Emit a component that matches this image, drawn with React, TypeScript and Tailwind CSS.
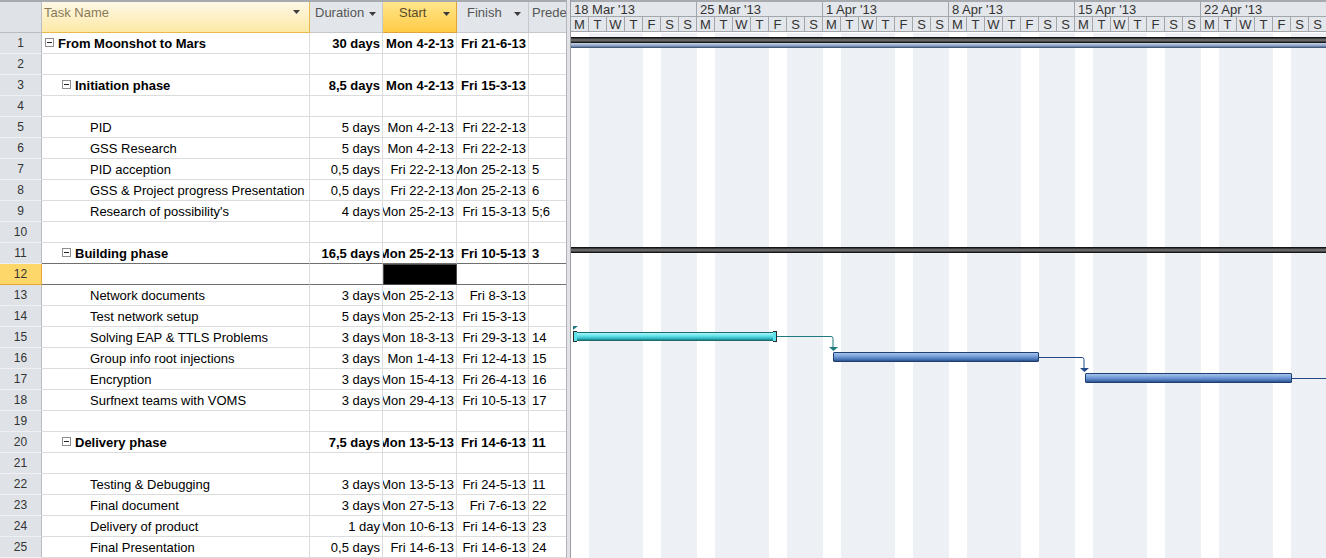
import React from "react";

type Row = {
  n: number;
  name?: string;
  level?: number;
  summary?: boolean;
  dur?: string;
  start?: string;
  finish?: string;
  pred?: string;
};

const rows: Row[] = [
  { n: 1, name: "From Moonshot to Mars", level: 1, summary: true, dur: "30 days", start: "Mon 4-2-13", finish: "Fri 21-6-13" },
  { n: 2 },
  { n: 3, name: "Initiation phase", level: 2, summary: true, dur: "8,5 days", start: "Mon 4-2-13", finish: "Fri 15-3-13" },
  { n: 4 },
  { n: 5, name: "PID", level: 3, dur: "5 days", start: "Mon 4-2-13", finish: "Fri 22-2-13" },
  { n: 6, name: "GSS Research", level: 3, dur: "5 days", start: "Mon 4-2-13", finish: "Fri 22-2-13" },
  { n: 7, name: "PID acception", level: 3, dur: "0,5 days", start: "Fri 22-2-13", finish: "Mon 25-2-13", pred: "5" },
  { n: 8, name: "GSS & Project progress Presentation", level: 3, dur: "0,5 days", start: "Fri 22-2-13", finish: "Mon 25-2-13", pred: "6" },
  { n: 9, name: "Research of possibility's", level: 3, dur: "4 days", start: "Mon 25-2-13", finish: "Fri 15-3-13", pred: "5;6" },
  { n: 10 },
  { n: 11, name: "Building phase", level: 2, summary: true, dur: "16,5 days", start: "Mon 25-2-13", finish: "Fri 10-5-13", pred: "3" },
  { n: 12 },
  { n: 13, name: "Network documents", level: 3, dur: "3 days", start: "Mon 25-2-13", finish: "Fri 8-3-13" },
  { n: 14, name: "Test network setup", level: 3, dur: "5 days", start: "Mon 25-2-13", finish: "Fri 15-3-13" },
  { n: 15, name: "Solving EAP & TTLS Problems", level: 3, dur: "3 days", start: "Mon 18-3-13", finish: "Fri 29-3-13", pred: "14" },
  { n: 16, name: "Group info root injections", level: 3, dur: "3 days", start: "Mon 1-4-13", finish: "Fri 12-4-13", pred: "15" },
  { n: 17, name: "Encryption", level: 3, dur: "3 days", start: "Mon 15-4-13", finish: "Fri 26-4-13", pred: "16" },
  { n: 18, name: "Surfnext teams with VOMS", level: 3, dur: "3 days", start: "Mon 29-4-13", finish: "Fri 10-5-13", pred: "17" },
  { n: 19 },
  { n: 20, name: "Delivery phase", level: 2, summary: true, dur: "7,5 days", start: "Mon 13-5-13", finish: "Fri 14-6-13", pred: "11" },
  { n: 21 },
  { n: 22, name: "Testing & Debugging", level: 3, dur: "3 days", start: "Mon 13-5-13", finish: "Fri 24-5-13", pred: "11" },
  { n: 23, name: "Final document", level: 3, dur: "3 days", start: "Mon 27-5-13", finish: "Fri 7-6-13", pred: "22" },
  { n: 24, name: "Delivery of product", level: 3, dur: "1 day", start: "Mon 10-6-13", finish: "Fri 14-6-13", pred: "23" },
  { n: 25, name: "Final Presentation", level: 3, dur: "0,5 days", start: "Fri 14-6-13", finish: "Fri 14-6-13", pred: "24" },
];

const weeks = ["18 Mar '13", "25 Mar '13", "1 Apr '13", "8 Apr '13", "15 Apr '13", "22 Apr '13"];
const dayLetters = ["M", "T", "W", "T", "F", "S", "S"];
const days = Array.from({ length: 42 }, (_, i) => i);

function Caret() {
  return (
    <svg width="7" height="4" viewBox="0 0 7 4">
      <path d="M0 0h7L3.5 4z" fill="#3c3c3c" />
    </svg>
  );
}

function Collapse() {
  return (
    <span className="mr-[4px] -mt-[3px] inline-flex h-[9px] w-[9px] shrink-0 items-center justify-center border border-[#8e8e8e] bg-white">
      <span className="h-px w-[5px] bg-[#222]" />
    </span>
  );
}

function TableRow({ r }: { r: Row }) {
  const sel = r.n === 12;
  const line = r.n === 11 || r.n === 12 ? "border-b border-[#6f6f6f]" : "border-b border-[#dcdcdc]";
  const weight = r.summary ? "font-bold" : "font-normal";
  const indent = r.level === 1 ? "pl-[3px]" : r.level === 2 ? "pl-[20px]" : "pl-[48px]";
  return (
    <div className="flex h-[21px]">
      <div
        className={
          sel
            ? "flex w-[42px] shrink-0 items-center justify-center border-r border-b border-[#e4a736] bg-[#fdd76a] text-[12px] text-[#333]"
            : "flex w-[42px] shrink-0 items-center justify-center border-r border-b border-r-[#b9bcc1] border-b-[#eef0f3] bg-[#dfe3e8] text-[12px] text-[#333]"
        }
      >
        {r.n}
      </div>
      <div className={`flex w-[268px] shrink-0 items-center overflow-hidden whitespace-nowrap border-r border-r-[#dcdcdc] pt-[1px] ${line} ${indent} ${weight}`}>
        {r.summary && <Collapse />}
        {r.name}
      </div>
      <div className={`flex w-[73px] shrink-0 items-center justify-end overflow-hidden whitespace-nowrap border-r border-r-[#dcdcdc] pr-[2px] pt-[1px] ${line} ${weight}`}>
        {r.dur}
      </div>
      <div
        className={
          sel
            ? "w-[74px] shrink-0 border border-[#4a4a4a] bg-black"
            : `flex w-[74px] shrink-0 items-center justify-end overflow-hidden whitespace-nowrap border-r border-r-[#dcdcdc] pr-[2px] pt-[1px] ${line} ${weight}`
        }
      >
        {r.start}
      </div>
      <div className={`flex w-[72px] shrink-0 items-center justify-end overflow-hidden whitespace-nowrap border-r border-r-[#dcdcdc] pr-[2px] pt-[1px] ${line} ${weight}`}>
        {r.finish}
      </div>
      <div className={`flex w-[37px] shrink-0 items-center overflow-hidden whitespace-nowrap pl-[3px] pt-[1px] ${line} ${weight}`}>
        {r.pred}
      </div>
    </div>
  );
}

export default function App() {
  return (
    <div className="flex h-[558px] w-[1326px] overflow-hidden bg-white font-['Liberation_Sans',Arial,sans-serif] text-[13px] text-black">
      {/* task table */}
      <div className="flex w-[566px] shrink-0 flex-col">
        <div className="flex h-[33px] shrink-0 border-t-2 border-[#a7aaae] text-[#555]">
          <div className="w-[42px] shrink-0 border-r border-b border-[#b9bcc1] bg-[#dfe3e8]" />
          <div className="flex w-[268px] shrink-0 justify-between border-r border-b border-[#e9b949] bg-[linear-gradient(to_bottom,#fdf8e6,#fde9a6)] pl-[2px] pr-[9px] pt-[2px] leading-[17px] text-[#8a7a58]">
            <span>Task Name</span>
            <span className="mt-[6px]"><Caret /></span>
          </div>
          <div className="flex w-[73px] shrink-0 gap-[5px] border-r border-b border-[#c5c8cc] bg-[#e2e5e9] pl-[5px] pt-[2px] leading-[17px]">
            <span>Duration</span>
            <span className="mt-[8px]"><Caret /></span>
          </div>
          <div className="flex w-[74px] shrink-0 justify-between border-r border-b border-[#e2a535] bg-[linear-gradient(to_bottom,#ffe68c,#ffcb45)] pl-[16px] pr-[6px] pt-[2px] leading-[17px] text-[#5a4a2a]">
            <span>Start</span>
            <span className="mt-[8px]"><Caret /></span>
          </div>
          <div className="flex w-[72px] shrink-0 justify-between border-r border-b border-[#c5c8cc] bg-[#e2e5e9] pl-[10px] pr-[7px] pt-[2px] leading-[17px]">
            <span>Finish</span>
            <span className="mt-[8px]"><Caret /></span>
          </div>
          <div className="w-[37px] shrink-0 overflow-hidden whitespace-nowrap border-b border-[#c5c8cc] bg-[#e2e5e9] pl-[3px] pt-[2px] leading-[17px]">
            Predecessors
          </div>
        </div>
        {rows.map((r) => (
          <TableRow key={r.n} r={r} />
        ))}
      </div>

      {/* splitter */}
      <div className="w-[5px] shrink-0 border-l border-r border-l-[#b0b3b7] border-r-[#9a9da1] bg-[#e1e3e6]" />

      {/* gantt chart */}
      <div className="flex min-w-0 flex-1 flex-col overflow-hidden">
        <div className="h-[33px] shrink-0 border-t-2 border-[#a7aaae] bg-white text-[#333]">
          <div className="flex h-[15px] border-b border-[#a3a6aa] bg-[#e3e6ea]">
            {weeks.map((w) => (
              <div key={w} className="w-[126px] shrink-0 whitespace-nowrap border-r border-[#a3a6aa] pl-[3px] pt-[1px] leading-[13px]">
                {w}
              </div>
            ))}
          </div>
          <div className="flex h-[15px] border-b border-[#a3a6aa] bg-[#e3e6ea]">
            {days.map((d) => (
              <div key={d} className="w-[18px] shrink-0 border-r border-[#a3a6aa] pt-[1px] text-center leading-[13px]">
                {dayLetters[d % 7]}
              </div>
            ))}
          </div>
        </div>
        <div className="relative flex-1">
          <div className="flex h-full">
            {days.map((d) => {
              const k = d % 7;
              return (
                <div
                  key={d}
                  className={k === 0 || k === 4 ? "h-full w-[18px] shrink-0 bg-white" : "h-full w-[18px] shrink-0 bg-[#edf0f5]"}
                />
              );
            })}
          </div>

          {/* project summary bar (row 1) */}
          <div className="absolute left-0 right-0 top-[4px] h-[6px] bg-[linear-gradient(to_bottom,#000_0%,#3c3c3c_25%,#7a7a7a_50%,#3a3a3a_80%,#000_100%)]" />
          <div className="absolute left-0 right-0 top-[10px] h-[5px] bg-[linear-gradient(to_bottom,#c9d5e8,#8aa1c5_55%,#34496b)]" />

          {/* summary bar (row 11) */}
          <div className="absolute left-0 right-0 top-[214px] h-[6px] bg-[linear-gradient(to_bottom,#000_0%,#3c3c3c_25%,#7a7a7a_50%,#3a3a3a_80%,#000_100%)]" />

          {/* row 15 task (selected) */}
          <div className="absolute left-[2px] top-[299px] h-[9px] w-[204px] border border-[#1d6a6d] bg-[linear-gradient(to_bottom,#aaf4f7,#5de2ea_45%,#2fb4bd_80%,#1f7f85)]" />
          <div className="absolute left-[2px] top-[298px] h-[11px] w-[4px] border border-[#2b2b2b] border-r-0 bg-[#5de2ea]" />
          <div className="absolute left-[202px] top-[298px] h-[11px] w-[4px] border border-[#2b2b2b] border-l-0 bg-[#5de2ea]" />

          {/* row 16 task */}
          <div className="absolute left-[262px] top-[319px] h-[10px] w-[206px] rounded-[1px] border border-[#1d3f73] bg-[linear-gradient(to_bottom,#a7c3ea,#729cd8_45%,#4873b3_80%,#2b4f86)]" />

          {/* row 17 task */}
          <div className="absolute left-[514px] top-[340px] h-[10px] w-[207px] rounded-[1px] border border-[#1d3f73] bg-[linear-gradient(to_bottom,#a7c3ea,#729cd8_45%,#4873b3_80%,#2b4f86)]" />

          {/* link lines */}
          <svg className="pointer-events-none absolute left-0 top-0" width="755" height="525">
            <path d="M2 293h5l-5 4z" fill="#1f7b80" />
            <path d="M206 303.5H260a2 2 0 0 1 2 2V314" fill="none" stroke="#1f7b80" strokeWidth="1" />
            <path d="M258 314h9l-4.5 4z" fill="#1f7b80" />
            <path d="M468 324.5H511a2 2 0 0 1 2 2V335" fill="none" stroke="#1f4a85" strokeWidth="1" />
            <path d="M509 335h9l-4.5 4z" fill="#1f4a85" />
            <path d="M721 345.5H760" fill="none" stroke="#1f4a85" strokeWidth="1" />
          </svg>
        </div>
      </div>
    </div>
  );
}
